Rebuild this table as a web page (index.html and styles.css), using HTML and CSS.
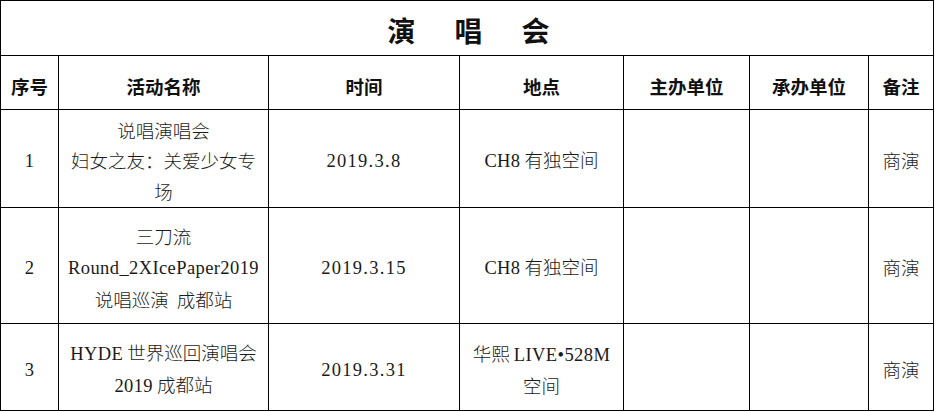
FILE: index.html
```html
<!DOCTYPE html>
<html lang="zh-CN">
<head>
<meta charset="utf-8">
<title>演唱会</title>
<link rel="stylesheet" href="styles.css">
</head>
<body>
<table class="sheet">
  <colgroup>
    <col class="c-no">
    <col class="c-name">
    <col class="c-time">
    <col class="c-place">
    <col class="c-host">
    <col class="c-org">
    <col class="c-note">
  </colgroup>
  <tr class="r-title">
    <td class="title" colspan="7">演唱会</td>
  </tr>
  <tr class="r-head">
    <th>序号</th>
    <th>活动名称</th>
    <th>时间</th>
    <th>地点</th>
    <th>主办单位</th>
    <th>承办单位</th>
    <th>备注</th>
  </tr>
  <tr class="r-1">
    <td><span class="lat">1</span></td>
    <td>说唱演唱会<br>妇女之友：关爱少女专场</td>
    <td><span class="lat date">2019.3.8</span></td>
    <td><span class="lat">CH8</span> 有独空间</td>
    <td></td>
    <td></td>
    <td>商演</td>
  </tr>
  <tr class="r-2">
    <td><span class="lat">2</span></td>
    <td>三刀流<br><span class="lat">Round_2XIcePaper2019</span><br>说唱巡演&nbsp; 成都站</td>
    <td><span class="lat date">2019.3.15</span></td>
    <td><span class="lat">CH8</span> 有独空间</td>
    <td></td>
    <td></td>
    <td>商演</td>
  </tr>
  <tr class="r-3">
    <td><span class="lat">3</span></td>
    <td><span class="lat">HYDE</span> 世界巡回演唱会<br><span class="lat">2019</span> 成都站</td>
    <td><span class="lat date">2019.3.31</span></td>
    <td>华熙 <span class="lat">LIVE•528M</span><br>空间</td>
    <td></td>
    <td></td>
    <td>商演</td>
  </tr>
</table>
</body>
</html>
```

FILE: styles.css
```css
html, body {
  margin: 0;
  padding: 0;
  background: #ffffff;
}

body {
  font-family: "Noto Sans CJK SC", sans-serif;
  color: #1a1a1a;
}

.sheet {
  border-collapse: collapse;
  table-layout: fixed;
  width: 933px;
}

.c-no { width: 58px; }
.c-name { width: 210px; }
.c-time { width: 191px; }
.c-place { width: 164px; }
.c-host { width: 126px; }
.c-org { width: 119px; }
.c-note { width: 65px; }

.sheet td,
.sheet th {
  border: 1px solid #000;
  padding: 4px 5px 0 5px;
  text-align: center;
  vertical-align: middle;
  font-size: 18.5px;
  line-height: 30.5px;
  font-weight: 300;
}

.sheet th {
  font-weight: 700;
  color: #111;
  padding-top: 8px;
}

.r-title { height: 55px; }
.r-head { height: 54px; }
.r-1 { height: 98px; }
.r-2 { height: 116px; }
.r-3 { height: 87px; }

.sheet .title {
  font-size: 28px;
  font-weight: 700;
  letter-spacing: 39px;
  padding: 3px 0 0 42px;
  line-height: 40px;
  color: #111;
}

.lat {
  font-family: "Liberation Serif", serif;
  font-size: 18.5px;
  letter-spacing: 0.4px;
}

.lat.date {
  letter-spacing: 1.3px;
}
```
